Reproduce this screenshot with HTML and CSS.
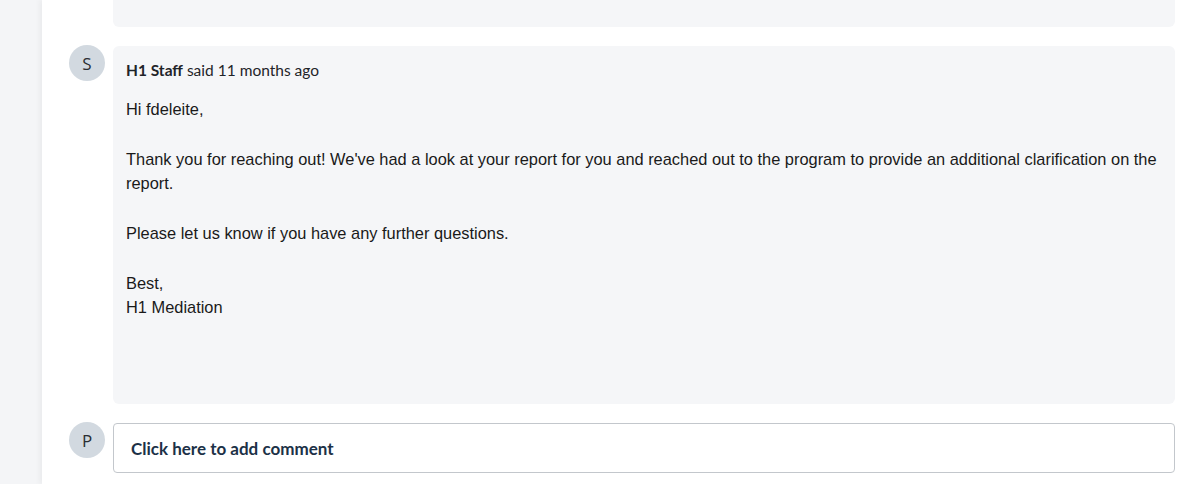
FILE: index.html
```html
<!DOCTYPE html>
<html lang="en">
<head>
<meta charset="utf-8">
<title>Comments</title>
<link rel="stylesheet" href="styles.css">
</head>
<body>
<div class="rail"></div>
<main class="panel">
  <div class="row row-prev">
    <div class="avatar-space"></div>
    <div class="card card-prev"></div>
  </div>
  <div class="row">
    <div class="avatar">S</div>
    <div class="card">
      <div class="meta"><strong>H1 Staff</strong> said 11 months ago</div>
      <div class="body">
        <p>Hi fdeleite,</p>
        <p>Thank you for reaching out! We've had a look at your report for you and reached out to the program to provide an additional clarification on the report.</p>
        <p>Please let us know if you have any further questions.</p>
        <p>Best,<br>H1 Mediation</p>
      </div>
    </div>
  </div>
  <div class="row">
    <div class="avatar">P</div>
    <div class="add-comment">Click here to add comment</div>
  </div>
</main>
</body>
</html>
```

FILE: styles.css
```css
html, body {
  margin: 0;
  height: 100%;
}
body {
  display: flex;
  background: #f4f5f7;
  overflow: hidden;
}
.rail {
  width: 42px;
  flex: none;
  background: #f4f5f7;
}
.panel {
  flex: 1;
  background: #ffffff;
  box-shadow: -3px 0 5px rgba(0, 0, 0, 0.04);
  padding: 0 25px 0 27px;
  display: flex;
  flex-direction: column;
  gap: 19px;
}
.row {
  display: flex;
  gap: 8px;
  align-items: flex-start;
}
.avatar-space {
  width: 36px;
  flex: none;
}
.avatar {
  width: 36px;
  height: 36px;
  flex: none;
  border-radius: 50%;
  background: #d2d9e0;
  color: #2a2e33;
  font-family: "Open Sans", Arial, sans-serif;
  font-size: 17px;
  display: flex;
  align-items: center;
  justify-content: center;
  margin-top: -1px;
}
.card {
  flex: 1;
  background: #f5f6f8;
  border-radius: 6px;
  padding: 12px 13px 0 13px;
  height: 346px;
}
.card-prev {
  height: 27px;
  padding: 0;
  border-radius: 0 0 6px 6px;
}
.meta {
  font-family: Lato, "Open Sans", sans-serif;
  font-size: 15.5px;
  line-height: 24px;
  color: #1f2429;
}
.meta strong {
  font-weight: 700;
}
.body {
  margin-top: 15px;
  font-family: "Liberation Sans", Arial, sans-serif;
  font-size: 16.4px;
  line-height: 24px;
  color: #1a1a1a;
}
.body p {
  margin: 0 0 26px 0;
}
.add-comment {
  flex: 1;
  height: 48px;
  border: 1px solid #c3c7cc;
  border-radius: 4px;
  background: #fff;
  box-sizing: content-box;
  display: flex;
  align-items: center;
  padding-left: 17px;
  font-family: Lato, "Open Sans", sans-serif;
  font-weight: 700;
  font-size: 17px;
  color: #1c3147;
}
```
